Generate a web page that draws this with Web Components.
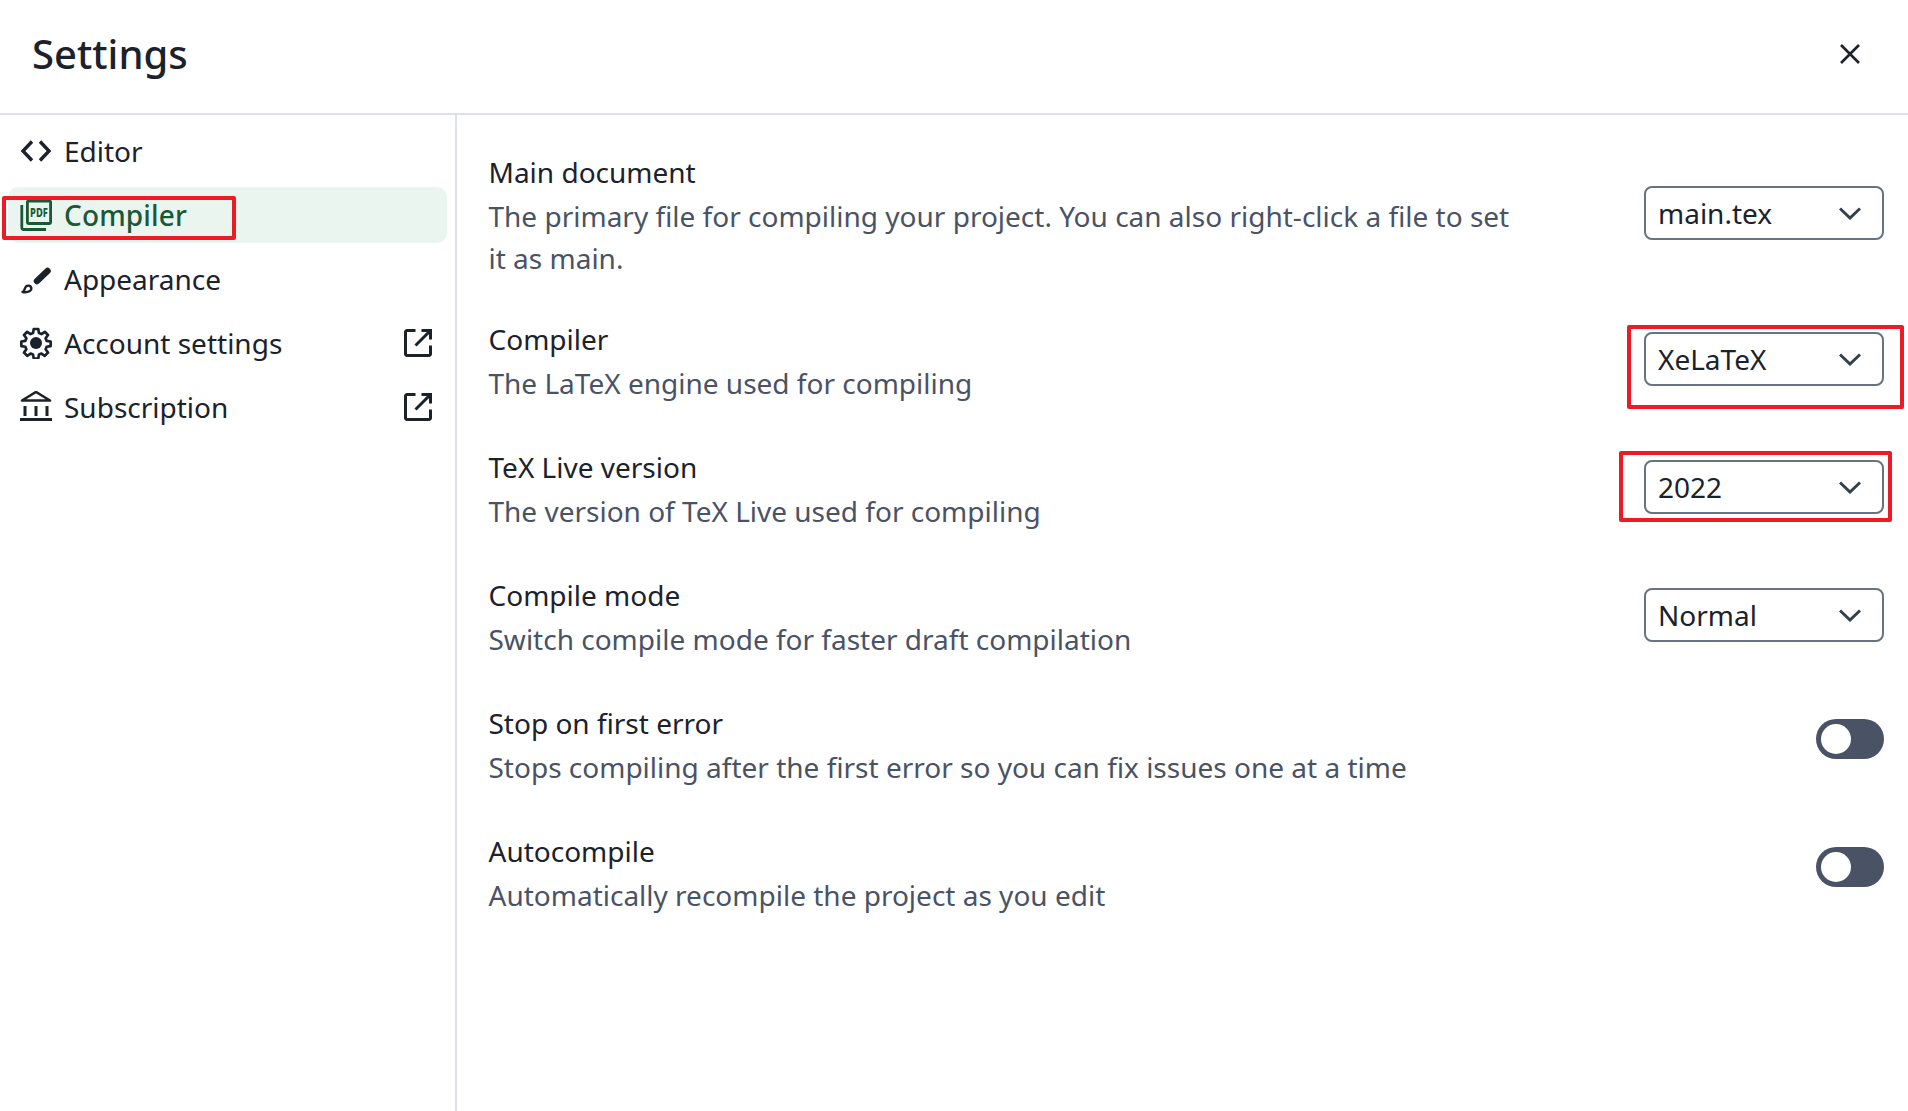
<!doctype html>
<html>
<head>
<meta charset="utf-8">
<title>Settings</title>
<style>
	html, body { margin: 0; height: 100%; background: #fff; }
	body { font-family: "Noto Sans", sans-serif; color: #1b222c; overflow: hidden; }
</style>
</head>
<body>
<settings-modal>
	<settings-nav slot="nav" label="Editor"><svg slot="icon" viewBox="0 0 32 32" width="32" height="32" fill="none" stroke="currentColor" stroke-width="3.4"><path d="M12 6.5 3 16l9 9.500M20 6.500 29 16l-9 9.500"/></svg></settings-nav>
	<settings-nav slot="nav" label="Compiler" active><svg slot="icon" viewBox="0 0 32 32" width="32" height="32" fill="none" stroke="currentColor" stroke-width="2.800"><path d="M1.800 6v22.500a2 2 0 0 0 2 2H26"/><rect x="7.400" y="2" width="23.200" height="22.500" rx="1.500"/><text transform="translate(19 18) scale(.72 1)" font-family="Noto Sans" font-size="13" font-weight="800" text-anchor="middle" fill="currentColor" stroke="none">PDF</text></svg></settings-nav>
	<settings-nav slot="nav" label="Appearance"><svg slot="icon" viewBox="0 0 32 32" width="32" height="32" fill="none" stroke="currentColor"><path d="M17 18 27.500 8" stroke-width="6.500" stroke-linecap="round"/><path d="M2.500 29c2.500-.5 1.500-3.500 3.500-5.500 1.800-1.600 4.800-.9 5.300 1.300.5 2.800-2.500 5.200-8.800 4.200Z" stroke-width="2.400" stroke-linejoin="round"/></svg></settings-nav>
	<settings-nav slot="nav" label="Account settings" external><svg slot="icon" viewBox="0 0 24 24" width="32" height="32" fill="currentColor"><circle cx="12" cy="12" r="4.500"/><path fill="none" stroke="currentColor" stroke-width="2" stroke-linejoin="round" d="M10.300 1.500h3.400l.5 3 1.900.8 2.500-1.700 2.400 2.400-1.800 2.500.8 1.900 3 .5v3.400l-3 .5-.8 1.900 1.800 2.500-2.400 2.400-2.500-1.700-1.900.8-.5 3h-3.400l-.5-3-1.900-.8-2.500 1.700-2.400-2.400 1.800-2.500-.8-1.900-3-.5v-3.400l3-.5.8-1.900-1.800-2.500 2.400-2.400 2.500 1.700 1.900-.8Z"/></svg></settings-nav>
	<settings-nav slot="nav" label="Subscription" external><svg slot="icon" viewBox="0 0 32 32" width="32" height="32" fill="none" stroke="currentColor" stroke-width="3"><path d="M16 1 30 9.500H2Z" stroke-width="2.600" stroke-linejoin="round"/><path d="M5 15v10M16 15v10M27 15v10M0 28.500h32"/></svg></settings-nav>

	<settings-row label="Main document" style="--row-gap:39px">
		The primary file for compiling your project. You can also right-click a file to set it as main.
		<settings-select slot="control" value="main.tex"></settings-select>
	</settings-row>
	<settings-row label="Compiler">
		The LaTeX engine used for compiling
		<settings-select slot="control" value="XeLaTeX"></settings-select>
	</settings-row>
	<settings-row label="TeX Live version">
		The version of TeX Live used for compiling
		<settings-select slot="control" value="2022"></settings-select>
	</settings-row>
	<settings-row label="Compile mode">
		Switch compile mode for faster draft compilation
		<settings-select slot="control" value="Normal"></settings-select>
	</settings-row>
	<settings-row label="Stop on first error">
		Stops compiling after the first error so you can fix issues one at a time
		<settings-toggle slot="control"></settings-toggle>
	</settings-row>
	<settings-row label="Autocompile">
		Automatically recompile the project as you edit
		<settings-toggle slot="control"></settings-toggle>
	</settings-row>

	<red-mark slot="marks" style="left:2px;top:196px;width:234px;height:44px"></red-mark>
	<red-mark slot="marks" style="left:1627px;top:325px;width:277px;height:84px"></red-mark>
	<red-mark slot="marks" style="left:1619px;top:451px;width:273px;height:71px"></red-mark>
</settings-modal>

<script>
;(function () {
	function shadow(el, html) {
		el.attachShadow({ mode: 'open' }).innerHTML = html
	}

	class SettingsModal extends HTMLElement {
		constructor() {
			super()
			shadow(this, `
				<style>
					:host { display: flex; flex-direction: column; height: 1111px; position: relative; }
					header {
						display: flex; align-items: center; justify-content: space-between;
						height: 115px; padding: 0 48px 6px 32px; box-sizing: border-box;
						border-bottom: 2px solid #dee2e7;
					}
					h1 { margin: 0; font-size: 40px; font-weight: 500; line-height: 56px; color: #1b222c; }
					button { all: unset; display: block; width: 20px; height: 20px; }
					svg { display: block; }
					.body { flex: 1; display: flex; min-height: 0; }
					nav {
						width: 439px; padding: 8px 8px 0 8px;
						border-right: 2px solid #dee2e7;
						display: flex; flex-direction: column; gap: 8px;
					}
					main { flex: 1; padding: 36px 24px 0 31.5px; display: flex; flex-direction: column; }
				</style>
				<header>
					<h1>Settings</h1>
					<button aria-label="Close"><svg viewBox="0 0 20 20" width="20" height="20" fill="none" stroke="#1b222c" stroke-width="2.600"><path d="M1 1l18 18M19 1 1 19"/></svg></button>
				</header>
				<div class="body">
					<nav><slot name="nav"></slot></nav>
					<main><slot></slot></main>
				</div>
				<slot name="marks"></slot>
			`)
		}
	}

	class SettingsNav extends HTMLElement {
		constructor() {
			super()
			let external = this.hasAttribute('external')
			shadow(this, `
				<style>
					:host {
						display: flex; align-items: center; gap: 12px;
						height: 56px; padding: 0 15px 0 12px; box-sizing: border-box;
						border-radius: 10px;
						font-size: 28px; color: #1b222c;
					}
					:host([active]) { background: #ebf5ef; color: #195936; font-weight: 500; letter-spacing: .15px; }
					.label { flex: 1; line-height: 40px; }
					.icon { width: 32px; height: 32px; flex: none; }
					::slotted(svg) { display: block; }
					.ext { display: block; flex: none; }
				</style>
				<span class="icon"><slot name="icon"></slot></span>
				<span class="label">${this.getAttribute('label')}</span>
				${external ? `<svg class="ext" viewBox="0 0 28 28" width="28" height="28" fill="none" stroke="#1b222c" stroke-width="3"><path d="M11.500 1.500H3A1.500 1.500 0 0 0 1.500 3v22A1.500 1.500 0 0 0 3 26.500h22a1.500 1.500 0 0 0 1.500-1.500v-8.500"/><path d="M17.500 1.500h9v9M26.500 1.500 11.500 16.500"/></svg>` : ''}
			`)
		}
	}

	class SettingsRow extends HTMLElement {
		constructor() {
			super()
			shadow(this, `
				<style>
					:host {
						display: flex; align-items: center; justify-content: space-between; gap: 32px;
						margin-bottom: var(--row-gap, 42px);
					}
					.text { width: 1040px; }
					.label { font-size: 28px; line-height: 42px; margin-bottom: 2px; color: #1b222c; }
					.desc { font-size: 28px; line-height: 42px; color: #495365; }
					.control { flex: none; position: relative; top: -2px; }
				</style>
				<div class="text">
					<div class="label">${this.getAttribute('label')}</div>
					<div class="desc"><slot></slot></div>
				</div>
				<div class="control"><slot name="control"></slot></div>
			`)
		}
	}

	class SettingsSelect extends HTMLElement {
		constructor() {
			super()
			shadow(this, `
				<style>
					:host {
						display: flex; align-items: center; justify-content: space-between;
						width: 240px; height: 54px; box-sizing: border-box;
						padding: 0 21px 0 12px;
						border: 2px solid #677283; border-radius: 8px; background: #fff;
						font-size: 28px; color: #1b222c;
					}
					svg { display: block; }
				</style>
				<span>${this.getAttribute('value')}</span>
				<svg viewBox="0 0 22 13" width="22" height="13" fill="none" stroke="#363f4d" stroke-width="3"><path d="M1 1.500 11 11 21 1.500"/></svg>
			`)
		}
	}

	class SettingsToggle extends HTMLElement {
		constructor() {
			super()
			shadow(this, `
				<style>
					:host {
						display: flex; align-items: center;
						width: 68px; height: 40px; padding: 0 5px; box-sizing: border-box;
						border-radius: 20px; background: #495365;
						position: relative; top: -4px;
					}
					i { display: block; width: 30px; height: 30px; border-radius: 50%; background: #fff; }
				</style>
				<i></i>
			`)
		}
	}

	class RedMark extends HTMLElement {
		constructor() {
			super()
			shadow(this, `
				<style>
					:host {
						display: block; position: absolute; box-sizing: border-box;
						border: 4px solid #ed1c24; border-radius: 2px; pointer-events: none;
					}
				</style>
			`)
		}
	}

	customElements.define('settings-modal', SettingsModal)
	customElements.define('settings-nav', SettingsNav)
	customElements.define('settings-row', SettingsRow)
	customElements.define('settings-select', SettingsSelect)
	customElements.define('settings-toggle', SettingsToggle)
	customElements.define('red-mark', RedMark)
})()
</script>
</body>
</html>
